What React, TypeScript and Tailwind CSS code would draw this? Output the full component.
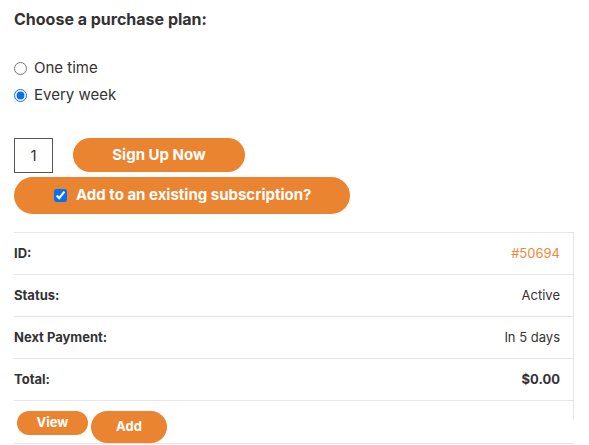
import { useState } from 'react';

const rows = [
  { label: 'ID:', value: '#50694', tone: 'text-[#ee8a3c]' },
  { label: 'Status:', value: 'Active', tone: 'text-[#333]' },
  { label: 'Next Payment:', value: 'In 5 days', tone: 'text-[#333]' },
  { label: 'Total:', value: '$0.00', tone: 'text-[#333] font-bold' },
];

const App = () => {
  const [plan, setPlan] = useState('week');
  const [qty, setQty] = useState('1');
  const [existing, setExisting] = useState(true);

  return (
    <div className="w-[589px] h-[445px] overflow-hidden bg-white pl-[14px] pt-[8px] font-['Inter',sans-serif] text-[#333]">
      <h2 className="text-[16px] leading-[22px] font-bold">Choose a purchase plan:</h2>

      <div className="mt-[25px] flex flex-col">
        {[
          { key: 'once', label: 'One time' },
          { key: 'week', label: 'Every week' },
        ].map((opt) => (
          <label key={opt.key} className="h-[27px] flex items-center gap-[7px] text-[15px]">
            <input
              type="radio"
              name="plan"
              checked={plan === opt.key}
              onChange={() => setPlan(opt.key)}
              className="m-0 w-[13px] h-[13px] accent-[#0a6ff5]"
            />
            <span>{opt.label}</span>
          </label>
        ))}
      </div>

      <div className="mt-[29px] flex items-start gap-[20px]">
        <input
          value={qty}
          onChange={(e) => setQty(e.target.value)}
          className="w-[39px] h-[35px] border border-[#555] text-center text-[15px] text-[#333] outline-none"
        />
        <button className="w-[172px] h-[34px] rounded-full bg-[#eb8430] text-white text-[15px] font-bold">
          Sign Up Now
        </button>
      </div>

      <label className="mt-[4px] w-[336px] h-[37px] rounded-full bg-[#eb8430] text-white text-[15px] font-bold flex items-center pl-[40px] gap-[9px]">
        <input
          type="checkbox"
          checked={existing}
          onChange={() => setExisting(!existing)}
          className="m-0 w-[13px] h-[13px] accent-[#0a6ff5]"
        />
        <span>Add to an existing subscription?</span>
      </label>

      <div className="mt-[18px] w-[560px]">
        <div className="border-r border-[#e6e6e6]">
          {rows.map((row) => (
            <div
              key={row.label}
              className="h-[42px] border-t border-[#e6e6e6] flex items-center justify-between pr-[13px] text-[13px]"
            >
              <span className="font-bold">{row.label}</span>
              <span className={row.tone}>{row.value}</span>
            </div>
          ))}
        </div>
        <div className="border-t border-b border-[#e6e6e6] flex h-[44px]">
          <div className="flex-1 flex items-start gap-[3px] pt-[10px] pl-[3px]">
            <button className="w-[71px] h-[24px] rounded-full bg-[#eb8430] text-white text-[13px] font-bold">
              View
            </button>
            <button className="w-[76px] h-[32px] rounded-full bg-[#eb8430] text-white text-[13px] font-bold">
              Add
            </button>
          </div>
          <div className="w-px h-[18px] bg-[#e6e6e6]" />
        </div>
      </div>
    </div>
  );
};

export default App;
